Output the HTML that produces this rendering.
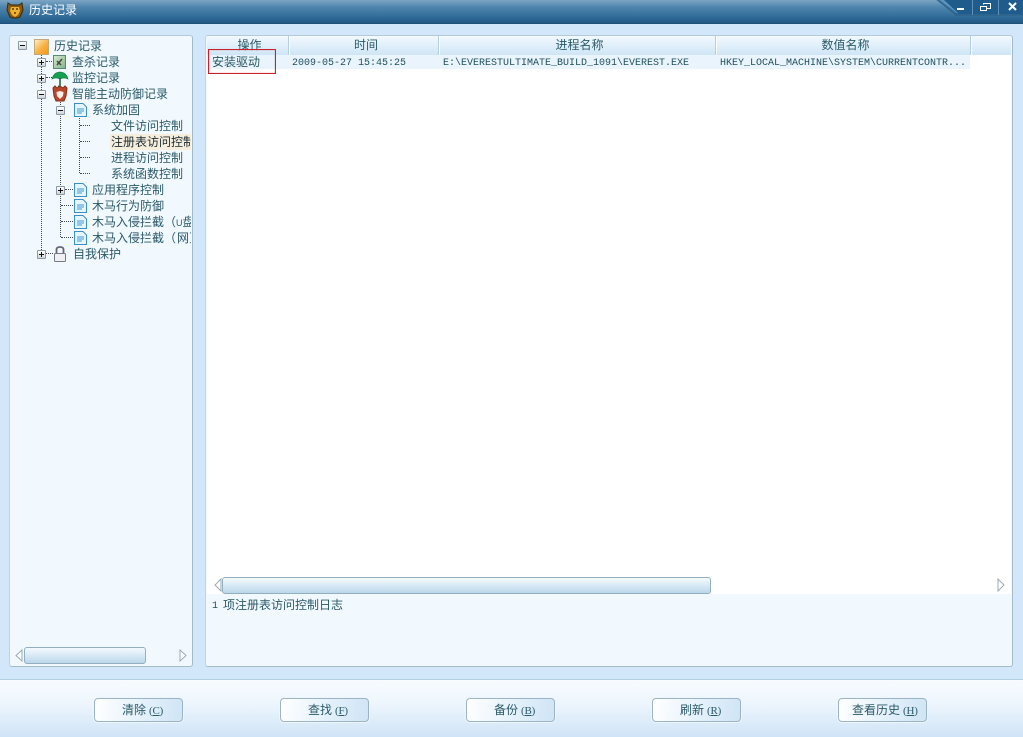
<!DOCTYPE html>
<html><head><meta charset="utf-8">
<style>
html,body{margin:0;padding:0}
body{width:1023px;height:737px;position:relative;overflow:hidden;background:#d2e7f9;font:12px/16px "Liberation Sans","WenQuanYi Zen Hei","Noto Sans CJK SC",sans-serif;color:#2b5a68}
.a{position:absolute}
.t{position:absolute;white-space:nowrap;height:16px;line-height:16px}
.panel{position:absolute;background:#f1f8fe;border:1px solid #a3bccb;border-top-color:#b4cad8;border-left-color:#bfd3e0;border-radius:3px;box-sizing:border-box}
.th{position:absolute;top:36px;height:19px;line-height:19px;text-align:center;padding-left:3px;background:linear-gradient(#f2f9fe,#cfe5f6);border-right:1px solid #fff;box-shadow:inset -1px 0 0 #b6cfe0;box-sizing:border-box}
.mono{font-family:"Liberation Mono",monospace;font-size:10px;letter-spacing:0;color:#1f4f5e}
.btn{position:absolute;top:698px;width:89px;height:24px;box-sizing:border-box;border:1px solid #9db4c3;border-radius:4px;background:linear-gradient(100deg,#fff,#e6f2fc 50%,#cfe4f5);text-align:left;line-height:22px;padding-left:27px;box-shadow:0 0 0 1px #eef6fd;white-space:nowrap}
.btn span{font:11px "Liberation Serif",serif;letter-spacing:-.2px;margin-left:3px}
.sb{position:absolute;box-sizing:border-box;border:1px solid #93aebf;border-radius:3px;background:linear-gradient(#f4fafe,#d8e9f6 50%,#bcd7ea)}
.dv{position:absolute;border-left:1px dotted #445;width:0}
.dh{position:absolute;border-top:1px dotted #445;height:0}
.pm{position:absolute;width:9px;height:9px;box-sizing:border-box;border:1px solid #8b9aa5;background:linear-gradient(#fff,#cfd6da);border-radius:1px}
.pm:before{content:"";position:absolute;left:1px;top:3px;width:5px;height:1px;background:#111}
.pm.p:after{content:"";position:absolute;left:3px;top:1px;width:1px;height:5px;background:#111}
.doc{position:absolute;width:15px;height:16px}
</style></head><body>
<div class="a" style="left:0;top:0;width:1023px;height:23px;background:linear-gradient(#7da5c3,#4f86ae 30%,#2f6a97 75%,#225a84);border-bottom:1px solid #1f5277"></div>
<svg class="a" style="left:6px;top:1px" width="18" height="18" viewBox="0 0 18 18"><path d="M2 2l3 2h8l3-2 1 7-3 7-3 1h-4l-3-1-3-7z" fill="#8a5a10" stroke="#3c2a0a"/><path d="M5 6h8l1 4-2 4-3 2-3-2-2-4z" fill="#f0b030"/><path d="M6 8h2M10 8h2M8 12h2" stroke="#3c2a0a" stroke-width="1.2"/></svg>
<div class="t" style="left:29px;top:2px;color:#fff;font-size:12px">历史记录</div>
<svg class="a" style="left:930px;top:0" width="93" height="24" viewBox="0 0 93 24">
<path d="M6 0L26 15H93V0Z" fill="#2a6390" opacity=".55"/>
<path d="M10 0L27 13H93V0Z" fill="#5d95bd"/>
<path d="M14 0L29 14H93V0Z" fill="#1f5c8c"/>
<path d="M8 0L26 15H93" stroke="#2a5f87" fill="none"/>
<path d="M42.500 0V15M68.500 0V15" stroke="#5d91b5"/>
<path d="M27 8h7v2h-7z" fill="#fff"/>
<rect x="50.500" y="6.500" width="6" height="4" fill="none" stroke="#fff"/><path d="M53.500 4.500V3.500H60.500V8.500H57" fill="none" stroke="#fff"/>
<path d="M79 3l7 7M86 3l-7 7" stroke="#fff" stroke-width="2"/>
</svg>

<div class="panel" style="left:9px;top:35px;width:184px;height:632px"></div>
<div class="panel" style="left:205px;top:35px;width:808px;height:632px"></div>
<div class="a" style="left:207px;top:55px;width:804px;height:539px;background:#fff"></div>
<div class="a" style="left:207px;top:55px;width:763px;height:14px;background:#eaf4fc"></div>

<!-- tree lines -->
<div class="dv" style="left:41px;top:54px;height:200px"></div>
<div class="dv" style="left:60px;top:100px;height:137px"></div>
<div class="dv" style="left:79px;top:118px;height:55px"></div>
<div class="dh" style="left:46px;top:61px;width:6px"></div>
<div class="dh" style="left:46px;top:77px;width:6px"></div>
<div class="dh" style="left:46px;top:253px;width:7px"></div>
<div class="dh" style="left:65px;top:189px;width:8px"></div>
<div class="dh" style="left:61px;top:205px;width:12px"></div>
<div class="dh" style="left:61px;top:221px;width:12px"></div>
<div class="dh" style="left:61px;top:237px;width:12px"></div>
<div class="dh" style="left:80px;top:125px;width:10px"></div>
<div class="dh" style="left:80px;top:141px;width:10px"></div>
<div class="dh" style="left:80px;top:157px;width:10px"></div>
<div class="dh" style="left:80px;top:173px;width:10px"></div>

<div class="pm" style="left:18px;top:41px"></div>
<div class="pm p" style="left:37px;top:58px"></div>
<div class="pm p" style="left:37px;top:74px"></div>
<div class="pm" style="left:37px;top:90px"></div>
<div class="pm" style="left:56px;top:106px"></div>
<div class="pm p" style="left:56px;top:186px"></div>
<div class="pm p" style="left:37px;top:250px"></div>

<!-- icons -->
<div class="a" style="left:34px;top:39px;width:13px;height:14px;border:1px solid #c0a878;background:linear-gradient(135deg,#fdeec6,#f8b040 55%,#f59a10)"></div>
<svg class="a" style="left:53px;top:55px" width="14" height="15"><defs><linearGradient id="g" x1="0" y1="0" x2="1" y2="1"><stop offset="0" stop-color="#d8ecd0"/><stop offset="1" stop-color="#7fb088"/></linearGradient></defs><rect x=".5" y=".5" width="12" height="13" fill="url(#g)" stroke="#5a8a70"/><path d="M4 10l5-6M4 6l4 4" stroke="#4a4a3a" stroke-width="1.500"/></svg>
<svg class="a" style="left:51px;top:70px" width="18" height="18"><path d="M1 9Q3 2 9 2T17 9Q13 7 9 9Q5 7 1 9Z" fill="#14a050" stroke="#0c7038" stroke-width=".6"/><path d="M9 8V15Q9 17 7 16" stroke="#1c5c30" fill="none" stroke-width="1.500"/></svg>
<svg class="a" style="left:52px;top:85px" width="16" height="18"><path d="M1 3L3 1 5 3 8 1 11 3 13 1 15 3 14 11 12 16H4L2 11Z" fill="#b8482c" stroke="#803018"/><path d="M4.500 7L8 6 11.500 7 11 11 8 14 5 11Z" fill="#fbeee8"/></svg>
<svg class="doc" style="left:73px;top:102px" viewBox="0 0 15 16"><path d="M1.500 1.500H10L13.500 5V14.500H1.500Z" fill="#e6f4fd" stroke="#3c8fc4"/><path d="M4 7h7M4 9h7M4 11h5" stroke="#3c9bd8"/></svg>
<svg class="doc" style="left:73px;top:182px" viewBox="0 0 15 16"><path d="M1.500 1.500H10L13.500 5V14.500H1.500Z" fill="#e6f4fd" stroke="#3c8fc4"/><path d="M4 7h7M4 9h7M4 11h5" stroke="#3c9bd8"/></svg>
<svg class="doc" style="left:73px;top:198px" viewBox="0 0 15 16"><path d="M1.500 1.500H10L13.500 5V14.500H1.500Z" fill="#e6f4fd" stroke="#3c8fc4"/><path d="M4 7h7M4 9h7M4 11h5" stroke="#3c9bd8"/></svg>
<svg class="doc" style="left:73px;top:214px" viewBox="0 0 15 16"><path d="M1.500 1.500H10L13.500 5V14.500H1.500Z" fill="#e6f4fd" stroke="#3c8fc4"/><path d="M4 7h7M4 9h7M4 11h5" stroke="#3c9bd8"/></svg>
<svg class="doc" style="left:73px;top:230px" viewBox="0 0 15 16"><path d="M1.500 1.500H10L13.500 5V14.500H1.500Z" fill="#e6f4fd" stroke="#3c8fc4"/><path d="M4 7h7M4 9h7M4 11h5" stroke="#3c9bd8"/></svg>
<svg class="a" style="left:53px;top:246px" width="14" height="16"><path d="M3.500 8V3.500Q3.500 1 7 1T10.500 3.500V8" fill="none" stroke="#667" stroke-width="1.800"/><rect x="1.500" y="7.500" width="11" height="8" rx="1" fill="#eef0f3" stroke="#778"/></svg>

<!-- tree text -->
<div class="t" style="left:54px;top:38px">历史记录</div>
<div class="t" style="left:72px;top:54px">查杀记录</div>
<div class="t" style="left:72px;top:70px">监控记录</div>
<div class="t" style="left:72px;top:86px">智能主动防御记录</div>
<div class="t" style="left:92px;top:102px">系统加固</div>
<div class="t" style="left:111px;top:118px">文件访问控制</div>
<div class="a" style="left:110px;top:134px;width:81px;height:16px;background:#f6eedd"></div>
<div class="t" style="left:111px;top:134px;width:80px;overflow:hidden;color:#1c2c30">注册表访问控制</div>
<div class="t" style="left:111px;top:150px">进程访问控制</div>
<div class="t" style="left:111px;top:166px">系统函数控制</div>
<div class="t" style="left:92px;top:182px">应用程序控制</div>
<div class="t" style="left:92px;top:198px">木马行为防御</div>
<div class="t" style="left:92px;top:214px;width:99px;overflow:hidden">木马入侵拦截（<span style="font:9px 'Liberation Sans',sans-serif">U</span>盘</div>
<div class="t" style="left:92px;top:230px;width:99px;overflow:hidden">木马入侵拦截（<span style="margin-left:1px">网页</span></div>
<div class="t" style="left:73px;top:246px">自我保护</div>

<!-- left scrollbar -->
<svg class="a" style="left:15px;top:649px" width="8" height="13"><path d="M7 1V12L1 6.500Z" fill="#fff" stroke="#9aabb5"/></svg>
<div class="sb" style="left:24px;top:647px;width:122px;height:17px"></div>
<svg class="a" style="left:179px;top:649px" width="8" height="13"><path d="M1 1V12L7 6.500Z" fill="#fff" stroke="#9aabb5"/></svg>

<!-- table header -->
<div class="th" style="left:207px;width:83px">操作</div>
<div class="th" style="left:290px;width:150px">时间</div>
<div class="th" style="left:440px;width:277px">进程名称</div>
<div class="th" style="left:717px;width:255px">数值名称</div>
<div class="th" style="left:972px;width:39px;box-shadow:none;border:0"></div>

<!-- row -->
<div class="t" style="left:212px;top:54px">安装驱动</div>
<div class="t mono" style="left:292px;top:56px">2009-05-27 15:45:25</div>
<div class="t mono" style="left:443px;top:56px">E:\EVERESTULTIMATE_BUILD_1091\EVEREST.EXE</div>
<div class="t mono" style="left:720px;top:56px">HKEY_LOCAL_MACHINE\SYSTEM\CURRENTCONTR...</div>
<svg class="a" style="left:208px;top:49px" width="68" height="25"><rect x=".5" y=".5" width="67" height="24" fill="none" stroke="#c8202c" stroke-width="1.200"/></svg>

<!-- right scrollbar -->
<svg class="a" style="left:214px;top:578px" width="8" height="14"><path d="M7 1V13L1 7Z" fill="#fff" stroke="#9aabb5"/></svg>
<div class="sb" style="left:222px;top:577px;width:489px;height:17px"></div>
<svg class="a" style="left:997px;top:578px" width="8" height="14"><path d="M1 1V13L7 7Z" fill="#fff" stroke="#9aabb5"/></svg>
<div class="t mono" style="left:212px;top:599px">1</div>
<div class="t" style="left:223px;top:597px">项注册表访问控制日志</div>

<!-- footer -->
<div class="a" style="left:0;top:679px;width:1023px;height:58px;border-top:1px solid #b4cfe2;box-sizing:border-box;background:linear-gradient(#f7fbfe,#eef6fd 40%,#cfe4f7)"></div>
<div class="btn" style="left:94px">清除<span>(<u>C</u>)</span></div>
<div class="btn" style="left:280px">查找<span>(<u>F</u>)</span></div>
<div class="btn" style="left:466px">备份<span>(<u>B</u>)</span></div>
<div class="btn" style="left:652px">刷新<span>(<u>R</u>)</span></div>
<div class="btn" style="left:838px;padding-left:13px">查看历史<span>(<u>H</u>)</span></div>
</body></html>
